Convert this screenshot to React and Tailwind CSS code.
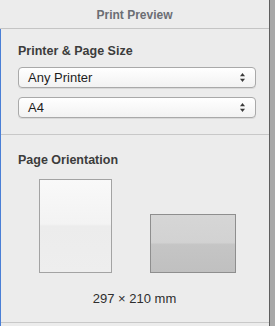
export default function App() {
  const font = { fontFamily: '"Liberation Sans", Arial, sans-serif' };
  const Arrows = () => (
    <svg width="7" height="11" viewBox="0 0 7 11" className="shrink-0">
      <path d="M3.5 1 L6 4.2 L1 4.2 Z" fill="#3a3a3a" />
      <path d="M3.5 10 L6 6.8 L1 6.8 Z" fill="#3a3a3a" />
    </svg>
  );
  const Select = ({ label }) => (
    <div className="flex h-[21px] w-[238px] items-center justify-between rounded-[4px] border border-[#a9a9a9] bg-gradient-to-b from-[#ffffff] to-[#f2f2f2] pl-[9px] pr-[9px] text-[13px] text-[#1d1d1d] shadow-[0_1px_0_rgba(0,0,0,0.08)]">
      <span>{label}</span>
      <Arrows />
    </div>
  );
  return (
    <div className="flex h-[326px] w-[275px] bg-[#a8a8a8] overflow-hidden" style={font}>
      <div className="flex w-[270px] flex-col border-r border-[#5e5e5e] bg-[#ececec]">
        <div className="flex h-[29px] items-center justify-center border-b border-[#c4c4c4] pt-[1px] text-[12px] font-bold text-[#6b6e74]">
          Print Preview
        </div>
        <div className="flex flex-1 flex-col border-l border-[#4a7fd6]">
          <div className="flex flex-col border-b border-[#c8c8c8] pb-[16px] pl-[17px] pt-[13px]">
            <div className="text-[12.5px] font-bold leading-[18px] text-[#3c3c3c]">Printer &amp; Page Size</div>
            <div className="mt-[7px]"><Select label="Any Printer" /></div>
            <div className="mt-[9px]"><Select label="A4" /></div>
          </div>
          <div className="flex flex-col pl-[17px] pt-[16px]">
            <div className="text-[12.5px] font-bold leading-[18px] text-[#3c3c3c]">Page Orientation</div>
            <div className="mt-[10px] flex items-end pl-[21px]">
              <div className="h-[94px] w-[73px] border border-[#a3a3a3] bg-[linear-gradient(to_bottom,#f9f9f9_0%,#f3f3f3_48%,#ececec_50%,#eeeeee_100%)]" />
              <div className="ml-[38px] h-[59px] w-[86px] border border-[#8e8e8e] bg-[linear-gradient(to_bottom,#d6d6d6_0%,#d2d2d2_48%,#c5c5c5_52%,#c0c0c0_100%)]" />
            </div>
          </div>
          <div className="mt-[16px] text-center text-[13px] text-[#2e2e2e] pr-[1px]">297 × 210 mm</div>
          <div className="mt-[13px] border-b border-[#c8c8c8]" />
        </div>
      </div>
    </div>
  );
}
